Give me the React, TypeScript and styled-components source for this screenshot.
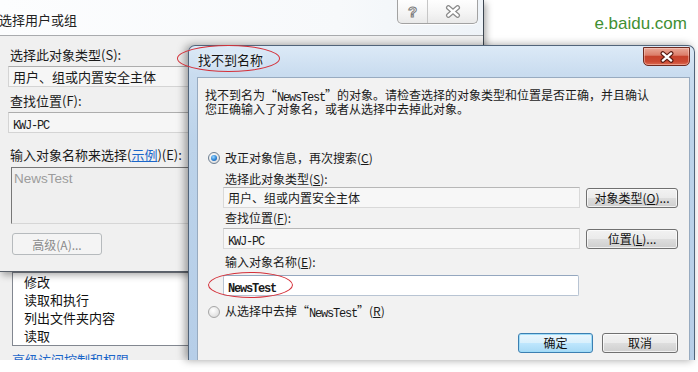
import styled, { createGlobalStyle } from 'styled-components';

const GlobalStyle = createGlobalStyle`
  html, body {
    margin: 0;
    background: #ffffff;
  }
  body {
    font-family: "Noto Sans CJK SC", "Liberation Sans", sans-serif;
    color: #1b1b1b;
  }
  * {
    box-sizing: border-box;
  }
`;

const perms = ['修改', '读取和执行', '列出文件夹内容', '读取'];

interface CrossProps {
  w: number;
  h: number;
  edge: string;
  face: string;
}

function Cross({ w, h, edge, face }: CrossProps) {
  const d = 'M2.5 2 L9.5 8 M9.5 2 L2.5 8';
  return (
    <svg width={w} height={h} viewBox="0 0 12 10">
      <path d={d} stroke={edge} strokeWidth={3.8} strokeLinecap="round" fill="none" />
      <path d={d} stroke={face} strokeWidth={1.9} strokeLinecap="round" fill="none" />
    </svg>
  );
}

export default function App() {
  return (
    <>
      <GlobalStyle />
      <Desktop>
        <PropsWindow>
          <PermList>
            {perms.map((p) => (
              <PermItem key={p}>{p}</PermItem>
            ))}
          </PermList>
          <PermLink>高级访问控制和权限</PermLink>
        </PropsWindow>

        <SelectDialog>
          <SelectCaption>
            <SelectTitle>选择用户或组</SelectTitle>
            <CaptionGroup>
              <HelpButton>?</HelpButton>
              <GreyClose>
                <Cross w={16} h={13} edge="#8b8b8b" face="#ffffff" />
              </GreyClose>
            </CaptionGroup>
          </SelectCaption>
          <SelectBody>
            <LeftLabel>选择此对象类型(S):</LeftLabel>
            <LeftField $top={4}>用户、组或内置安全主体</LeftField>
            <LeftLabel $top={7}>查找位置(F):</LeftLabel>
            <LeftField $top={4}>
              <Mono>KWJ-PC</Mono>
            </LeftField>
            <LeftLabel $top={15}>
              输入对象名称来选择(<Link>示例</Link>)(E):
            </LeftLabel>
            <NameArea>NewsTest</NameArea>
            <DisabledButton>高级(A)...</DisabledButton>
          </SelectBody>
        </SelectDialog>

        <Watermark>e.baidu.com</Watermark>

        <ErrorDialog>
          <ErrorCaption>
            <ErrorTitle>找不到名称</ErrorTitle>
            <RedClose>
              <Cross w={16} h={12} edge="#5a1b12" face="#ffffff" />
            </RedClose>
          </ErrorCaption>
          <ErrorBody>
            <Message>
              <MessageLine>
                找不到名为“<Mono>NewsTest</Mono>”的对象。请检查选择的对象类型和位置是否正确，并且确认
              </MessageLine>
              <MessageLine>您正确输入了对象名，或者从选择中去掉此对象。</MessageLine>
            </Message>

            <RadioRow $top={34}>
              <Radio $checked />
              <span>
                改正对象信息，再次搜索(<u>C</u>)
              </span>
            </RadioRow>
            <Indent>
              <Label $top={6}>
                选择此对象类型(<u>S</u>):
              </Label>
              <FieldRow $top={1}>
                <ReadField>用户、组或内置安全主体</ReadField>
                <WinButton>
                  对象类型(<u>O</u>)...
                </WinButton>
              </FieldRow>
              <Label $top={3}>
                查找位置(<u>F</u>):
              </Label>
              <FieldRow $top={3}>
                <ReadField>
                  <Mono>KWJ-PC</Mono>
                </ReadField>
                <WinButton>
                  位置(<u>L</u>)...
                </WinButton>
              </FieldRow>
              <Label $top={6}>
                输入对象名称(<u>E</u>):
              </Label>
              <NameInput>
                <Mono $bold>NewsTest</Mono>
              </NameInput>
            </Indent>
            <RadioRow $top={8}>
              <Radio />
              <span>
                从选择中去掉“<Mono>NewsTest</Mono>”(<u>R</u>)
              </span>
            </RadioRow>

            <ButtonRow>
              <WinButton $width={75} $primary>
                确定
              </WinButton>
              <WinButton $width={76}>取消</WinButton>
            </ButtonRow>
          </ErrorBody>
        </ErrorDialog>

        <Ring $x={177} $y={45} $w={103} $h={27} />
        <Ring $x={208} $y={272} $w={85} $h={26} />
      </Desktop>
    </>
  );
}

const Desktop = styled.main`
  position: relative;
  width: 698px;
  height: 372px;
  overflow: hidden;
  background: #ffffff;
`;

/* window behind everything: permission list */
const PropsWindow = styled.section`
  position: absolute;
  left: 0;
  top: 0;
  width: 484px;
  height: 360px;
  overflow: hidden;
  background: #f0f0f0;
  padding: 272px 0 0 12px;
  display: flex;
  flex-direction: column;
`;

const PermList = styled.ul`
  margin: 0;
  list-style: none;
  width: 330px;
  height: 76px;
  border: 1px solid #828790;
  background: #ffffff;
  padding: 0 0 0 11px;
`;

const PermItem = styled.li`
  font-size: 13px;
  line-height: 18px;
  color: #111;
`;

const PermLink = styled.span`
  margin-top: 6px;
  font-size: 13px;
  line-height: 16px;
  color: #1b66c9;
`;

/* 选择用户或组 */
const SelectDialog = styled.section`
  position: absolute;
  left: 0;
  top: 0;
  width: 484px;
  height: 272px;
  display: flex;
  flex-direction: column;
  background: #f0f0f0;
  border-right: 1px solid #3c4651;
  border-bottom: 1px solid #59606a;
  box-shadow: 2px 3px 7px rgba(0, 0, 0, 0.35);
  overflow: hidden;
`;

const SelectCaption = styled.header`
  height: 36px;
  flex-shrink: 0;
  display: flex;
  justify-content: space-between;
  align-items: flex-start;
  background: linear-gradient(90deg, #fcfdfe 0%, #f7f9fb 70%, #eef3f8 100%);
  border-bottom: 1px solid #a9abae;
`;

const SelectTitle = styled.h1`
  margin: 13px 0 0 -1px;
  font-size: 13px;
  line-height: 14px;
  font-weight: normal;
  color: #222;
`;

const CaptionGroup = styled.div`
  display: flex;
  height: 25px;
  margin: -1px 5px 0 0;
  border: 1px solid #a2a2a2;
  border-top: none;
  border-radius: 0 0 5px 5px;
  background: linear-gradient(180deg, #ffffff 0%, #f4f4f4 60%, #e9e9e9 100%);
  box-shadow: 0 1px 0 rgba(255, 255, 255, 0.8);
`;

const HelpButton = styled.div`
  width: 30px;
  display: flex;
  justify-content: center;
  align-items: center;
  border-right: 1px solid #c6c6c6;
  font-family: "Liberation Sans", sans-serif;
  font-weight: bold;
  font-size: 15px;
  color: #ffffff;
  -webkit-text-stroke: 1px #7d7d7d;
`;

const GreyClose = styled.div`
  width: 49px;
  display: flex;
  justify-content: center;
  align-items: center;
`;

const SelectBody = styled.div`
  display: flex;
  flex-direction: column;
  padding: 12px 0 0 8px;
`;

const LeftLabel = styled.div<{ $top?: number }>`
  margin-top: ${(p) => p.$top ?? 0}px;
  padding-left: 2px;
  font-size: 13px;
  line-height: 14px;
  color: #1a1a1a;
  white-space: nowrap;
`;

const Link = styled.span`
  color: #1b66c9;
  text-decoration: underline;
`;

const LeftField = styled.div<{ $top?: number }>`
  margin-top: ${(p) => p.$top ?? 0}px;
  height: 21px;
  border: 1px solid #d4d4d4;
  border-top-color: #adadad;
  border-right: none;
  background: #f6f6f6;
  padding-left: 4px;
  font-size: 13px;
  line-height: 19px;
  color: #1a1a1a;
`;

const NameArea = styled.div`
  margin: 5px 0 0 3px;
  height: 57px;
  border: 1px solid #d6d6d6;
  border-top-color: #777;
  border-left-color: #777;
  border-right: none;
  background: #efefef;
  padding: 3px 0 0 2px;
  font-family: "Liberation Sans", sans-serif;
  font-size: 13.5px;
  line-height: 16px;
  color: #9c9c9c;
`;

const DisabledButton = styled.div`
  margin: 9px 0 0 4px;
  width: 90px;
  height: 22px;
  border: 1px solid #b6babd;
  border-radius: 3px;
  background: #f4f4f4;
  display: flex;
  align-items: center;
  justify-content: center;
  font-size: 12px;
  color: #8b8b8b;
`;

const Watermark = styled.div`
  position: absolute;
  right: 11px;
  top: 14px;
  font-family: "Liberation Sans", Arial, sans-serif;
  font-size: 17px;
  line-height: 20px;
  color: #3f8f33;
`;

/* 找不到名称 */
const ErrorDialog = styled.section`
  position: absolute;
  left: 188px;
  top: 45px;
  width: 507px;
  height: 315px;
  display: flex;
  flex-direction: column;
  padding: 0 4px 0 8px;
  border: 1px solid #51647a;
  border-bottom: none;
  border-radius: 7px 7px 0 0;
  background: linear-gradient(180deg, #dceaf7 0%, #c9dcef 9%, #bcd3ea 30%, #b6cee8 100%);
  box-shadow: -3px 0 9px rgba(0, 0, 0, 0.38);
  overflow: hidden;
`;

const ErrorCaption = styled.header`
  height: 31px;
  flex-shrink: 0;
  display: flex;
  justify-content: space-between;
  align-items: flex-start;
`;

const ErrorTitle = styled.h1`
  margin: 7px 0 0 1px;
  font-size: 13px;
  line-height: 14px;
  font-weight: normal;
  color: #151515;
  text-shadow: 0 0 6px rgba(255, 255, 255, 0.9);
`;

const RedClose = styled.div`
  margin-top: 1px;
  width: 47px;
  height: 19px;
  display: flex;
  justify-content: center;
  align-items: center;
  border: 1px solid #6e2a20;
  border-radius: 0 0 5px 5px;
  background: linear-gradient(180deg, #e9a898 0%, #dc7e6a 42%, #c7432d 50%, #cc4a33 80%, #dc6c52 100%);
  box-shadow: inset 0 0 0 1px rgba(255, 220, 210, 0.45);
`;

const ErrorBody = styled.div`
  flex: 1;
  display: flex;
  flex-direction: column;
  background: #f2f2f2;
  border: 1px solid #98abc0;
  border-bottom: none;
  padding: 10px 11px 0 10px;
  font-size: 12px;
  color: #1a1a1a;
`;

const Message = styled.div`
  margin-left: -3px;
  display: flex;
  flex-direction: column;
`;

const MessageLine = styled.p`
  margin: 0;
  height: 14px;
  font-size: 12px;
  line-height: 14px;
  white-space: nowrap;
`;

const Mono = styled.span<{ $bold?: boolean }>`
  display: inline-block;
  height: 12px;
  vertical-align: -1px;
  font-family: "Liberation Mono", monospace;
  font-size: 12px;
  line-height: 12px;
  letter-spacing: -1.2px;
  font-weight: ${(p) => (p.$bold ? 'bold' : 'normal')};
`;

const RadioRow = styled.div<{ $top: number }>`
  margin-top: ${(p) => p.$top}px;
  height: 16px;
  display: flex;
  align-items: center;
  gap: 5px;
  font-size: 12px;
  line-height: 14px;
  white-space: nowrap;
`;

const Radio = styled.span<{ $checked?: boolean }>`
  width: 12px;
  height: 12px;
  flex-shrink: 0;
  border-radius: 50%;
  border: 1px solid ${(p) => (p.$checked ? '#6d7f92' : '#a6a6a6')};
  background: radial-gradient(circle at 40% 35%, #ffffff 0%, #e6e6e6 60%, #cfcfcf 100%);
  display: flex;
  align-items: center;
  justify-content: center;

  &::after {
    content: '';
    display: ${(p) => (p.$checked ? 'block' : 'none')};
    width: 6px;
    height: 6px;
    border-radius: 50%;
    background: radial-gradient(circle at 40% 35%, #9bd8ff 0%, #2c82d4 55%, #154f9a 100%);
  }
`;

const Indent = styled.div`
  margin-left: 15px;
  display: flex;
  flex-direction: column;
`;

const Label = styled.div<{ $top: number }>`
  margin-top: ${(p) => p.$top}px;
  padding-left: 2px;
  font-size: 12px;
  line-height: 14px;
  white-space: nowrap;
`;

const FieldRow = styled.div<{ $top: number }>`
  margin-top: ${(p) => p.$top}px;
  height: 21px;
  display: flex;
  align-items: center;
  gap: 6px;
`;

const ReadField = styled.div`
  width: 357px;
  height: 21px;
  border: 1px solid #d9d9d9;
  border-top-color: #b7b7b7;
  background: #f7f7f7;
  padding-left: 4px;
  font-size: 12px;
  line-height: 19px;
  white-space: nowrap;
`;

const NameInput = styled.div`
  margin-top: 6px;
  width: 356px;
  height: 21px;
  border: 1px solid #b8c4d3;
  border-top-color: #94a7bf;
  border-radius: 2px;
  background: #ffffff;
  padding-left: 4px;
  line-height: 19px;
`;

const WinButton = styled.div<{ $width?: number; $primary?: boolean }>`
  width: ${(p) => p.$width ?? 92}px;
  height: 20px;
  flex-shrink: 0;
  display: flex;
  align-items: center;
  justify-content: center;
  border: 1px solid ${(p) => (p.$primary ? '#3c7fb1' : '#707070')};
  border-radius: 3px;
  background: ${(p) =>
    p.$primary
      ? 'linear-gradient(180deg, #eaf6fd 0%, #d9f0fc 48%, #bee6fd 52%, #a7d9f5 100%)'
      : 'linear-gradient(180deg, #f2f2f2 0%, #ebebeb 48%, #dddddd 52%, #cfcfcf 100%)'};
  box-shadow: inset 0 0 0 1px ${(p) => (p.$primary ? '#9fdcf8' : 'rgba(255,255,255,0.7)')};
  font-size: 12px;
  line-height: 14px;
  color: #111;
  white-space: nowrap;
`;

const ButtonRow = styled.div`
  margin-top: 13px;
  display: flex;
  justify-content: flex-end;
  gap: 9px;
`;

/* red hand-drawn annotation rings */
const Ring = styled.div<{ $x: number; $y: number; $w: number; $h: number }>`
  position: absolute;
  left: ${(p) => p.$x}px;
  top: ${(p) => p.$y}px;
  width: ${(p) => p.$w}px;
  height: ${(p) => p.$h}px;
  border: 1.5px solid #d4313a;
  border-radius: 50%;
  pointer-events: none;
`;
